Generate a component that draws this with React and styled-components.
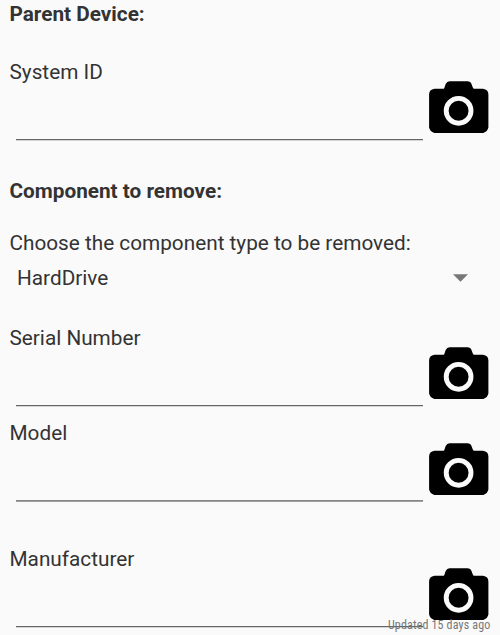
import React from "react";
import styled, { createGlobalStyle } from "styled-components";

const GlobalStyle = createGlobalStyle`
  * { box-sizing: border-box; }
  body { margin: 0; background: #fafafa; overflow: hidden; }
`;

const Screen = styled.main`
  position: relative;
  width: 500px;
  height: 635px;
  overflow: hidden;
  background: #fafafa;
  color: #333;
  font-family: Roboto, sans-serif;
  font-size: 20.75px;
  line-height: 24px;
`;

const Heading = styled.h2`
  margin: 0;
  padding-left: 9.5px;
  padding-top: ${(p) => p.$top}px;
  font-size: 20.75px;
  line-height: 24px;
  font-weight: 700;
`;

const FieldRow = styled.div`
  display: flex;
  height: 80px;
  margin-top: ${(p) => p.$gap}px;
`;

const FieldLabel = styled.label`
  display: flex;
  flex-direction: column;
  justify-content: space-between;
  width: 429px;
  padding-left: 9.5px;
`;

const Input = styled.input`
  width: 407.5px;
  height: 30px;
  margin-left: 6px;
  padding: 0 4px;
  border: 0;
  border-bottom: 1px solid ${(p) => (p.$soft ? "#858585" : "#666")};
  box-shadow: 0 1px ${(p) => (p.$soft ? "#a0a0a0" : "#d4d4d4")};
  outline: 0;
  background: transparent;
  font: inherit;
`;

const CameraButton = styled.button`
  width: 60px;
  height: 53px;
  margin-top: ${(p) => (p.$lowered ? 22 : 21)}px;
  padding: 0;
  border: 0;
  background: transparent;
  svg { display: block; }
`;

const Prompt = styled.p`
  margin: 28px 0 0;
  padding-left: 9.5px;
`;

const Picker = styled.div`
  display: flex;
  align-items: center;
  justify-content: space-between;
  height: 24px;
  margin-top: 11px;
  padding: 0 32.5px 0 17px;
`;

const UpdatedNote = styled.span`
  position: absolute;
  right: 9.5px;
  bottom: 2px;
  color: #777;
  font-size: 12px;
  font-stretch: 75%;
  letter-spacing: 0.17px;
  line-height: 16px;
`;

function CameraIcon() {
  return (
    <svg width="60" height="53" viewBox="0 0 60 53">
      <path d="M5.5 7.7H14.8Q15.4 7.5 15.8 5.5L16.7 3Q18 .2 20.5 .2H38.5Q41.5 .2 42.5 3L43.5 5.7Q44 7.7 45 7.7H54Q59.4 8.5 59.4 13.5V46.5Q58.5 50.5 54.3 52H5.3Q1 50.5 .1 46.5V13.5Q.1 8.5 5.5 7.7Z" />
      <circle cx="29.6" cy="29.8" r="12.4" fill="none" stroke="#fafafa" strokeWidth="4.9" />
    </svg>
  );
}

function ScanField({ label, gap, soft, lowered }) {
  return (
    <FieldRow $gap={gap}>
      <FieldLabel>{label}<Input $soft={soft} /></FieldLabel>
      <CameraButton $lowered={lowered} aria-label={`Scan ${label}`}><CameraIcon /></CameraButton>
    </FieldRow>
  );
}

export default function App() {
  return (
    <Screen>
      <GlobalStyle />
      <Heading $top={2}>Parent Device:</Heading>
      <ScanField label="System ID" gap={34} />
      <Heading $top={39}>Component to remove:</Heading>
      <Prompt>Choose the component type to be removed:</Prompt>
      <Picker>
        HardDrive
        <svg width="15" height="8" viewBox="0 0 15 8"><path d="M0 .3H15L7.5 7.8Z" fill="#777" /></svg>
      </Picker>
      <ScanField label="Serial Number" gap={36} />
      <ScanField label="Model" gap={15} soft lowered />
      <ScanField label="Manufacturer" gap={46} />
      <UpdatedNote>Updated 15 days ago</UpdatedNote>
    </Screen>
  );
}
